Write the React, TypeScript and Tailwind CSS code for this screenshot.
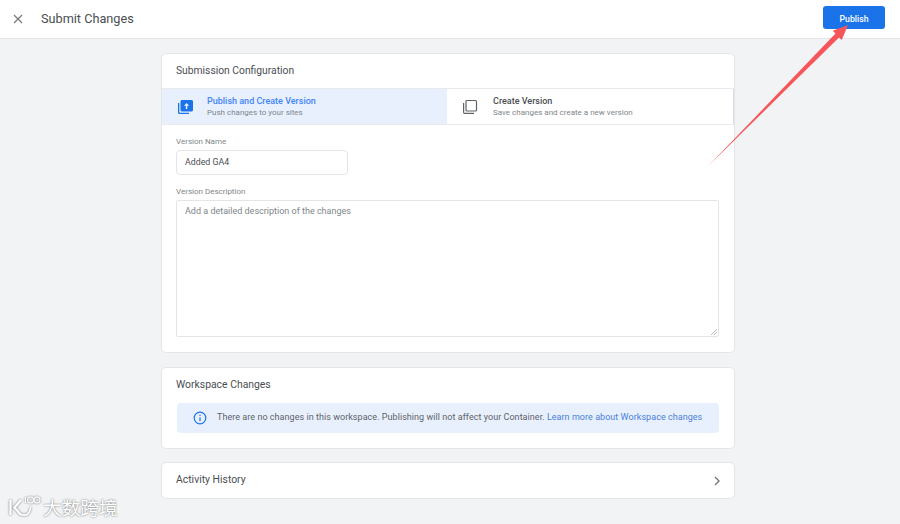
export default function App() {
  return (
    <div className="relative h-[524px] w-[900px] overflow-hidden bg-[#f1f3f4] font-['Roboto',sans-serif] text-[#3c4043]">
      <header className="flex h-[39px] items-center border-b border-[#e3e5e8] bg-white pl-[12px] pr-[15px]">
        <svg className="h-[12px] w-[12px] text-[#6f7478]" viewBox="0 0 12 12" fill="none" stroke="currentColor" strokeWidth="1.1"><path d="M2 2 10 10M10 2 2 10" /></svg>
        <h1 className="ml-[17px] text-[12.7px] text-[#4a4e52]">Submit Changes</h1>
        <button className="mt-[-3px] ml-auto h-[23px] w-[62px] rounded-[3px] bg-[#1a73e8] pt-[4px] text-[8.7px] font-medium text-white">Publish</button>
      </header>

      <main className="flex flex-col items-center pr-[4px] pt-[14px]">
        <section className="h-[300px] w-[574px] rounded-[5px] border border-[#e3e5e8] bg-white">
          <h2 className="flex h-[34px] items-center pl-[14px] text-[10.3px] text-[#4a4e52]">Submission Configuration</h2>
          <div className="flex h-[37px] border-y border-[#e8eaed]">
            <div className="flex w-[285px] items-center bg-[#e8f0fe] pl-[15px]">
              <svg className="h-[16px] w-[16px] text-[#1a73e8]" viewBox="0 0 16 16" fill="currentColor">
                <path d="M1 4h1.300v9.200c0 .3.2.5.5.5H12V15H2.500C1.700 15 1 14.300 1 13.500Z" />
                <path fillRule="evenodd" d="M5 1h9.500c.8 0 1.500.7 1.500 1.500v8.500c0 .8-.7 1.500-1.500 1.500H5c-.8 0-1.500-.7-1.500-1.500V2.500C3.500 1.700 4.200 1 5 1Zm4.600 3L7 6.800h1.800V10h1.500V6.800h1.800Z" />
              </svg>
              <div className="ml-[14px]">
                <div className="text-[9px] leading-[11px] font-medium text-[#4285f4]">Publish and Create Version</div>
                <div className="text-[8px] leading-[11px] text-[#80868b]">Push changes to your sites</div>
              </div>
            </div>
            <div className="flex flex-1 items-center border-r border-[#dadce0] pl-[15px]">
              <svg className="h-[16px] w-[16px] text-[#5f6368]" viewBox="0 0 16 16" fill="none" stroke="currentColor" strokeWidth="1.200">
                <rect x="4" y="1.500" width="10.500" height="10.500" rx="1" />
                <path d="M1.600 4v9.200c0 .7.500 1.200 1.200 1.200H12" />
              </svg>
              <div className="ml-[15px]">
                <div className="text-[9px] leading-[11px] font-medium text-[#4a4e52]">Create Version</div>
                <div className="text-[8px] leading-[11px] text-[#80868b]">Save changes and create a new version</div>
              </div>
            </div>
          </div>
          <div className="pr-[15px] pl-[14px] pt-[12px]">
            <div className="text-[8px] leading-[10px] text-[#80868b]">Version Name</div>
            <div className="mt-[3px] flex h-[25px] w-[172px] items-center rounded-[4px] border border-[#e3e5e8] pl-[8px] text-[8.8px] text-[#4a4e52]">Added GA4</div>
            <div className="mt-[12px] text-[8px] leading-[10px] text-[#80868b]">Version Description</div>
            <div className="relative mt-[3px] h-[137px] rounded-[2px] border border-[#e3e5e8] pl-[8px] pt-[5px] text-[9px] leading-[11px] text-[#80868b]">
              Add a detailed description of the changes
              <svg className="absolute right-[1px] bottom-[1px] h-[6px] w-[6px] text-[#9aa0a6]" viewBox="0 0 6 6" stroke="currentColor" strokeWidth="0.7"><path d="M0 6 6 0M3 6 6 3" /></svg>
            </div>
          </div>
        </section>

        <section className="mt-[14px] h-[82px] w-[574px] rounded-[5px] border border-[#e3e5e8] bg-white pr-[15px] pl-[15px]">
          <h2 className="-ml-px flex h-[33px] items-center text-[10.4px] text-[#4a4e52]">Workspace Changes</h2>
          <div className="mt-[2px] flex h-[30px] items-center rounded-[4px] bg-[#e8f0fe] pl-[16px] text-[9px] tracking-[0.045px] text-[#5f6368]">
            <svg className="h-[14px] w-[14px] text-[#1a73e8]" viewBox="0 0 14 14" fill="none" stroke="currentColor" strokeWidth="1.200">
              <circle cx="7" cy="7" r="5.800" />
              <path d="M7 6.200v4" />
              <path d="M7 3.800v1.300" />
            </svg>
            <span className="ml-[10px]">There are no changes in this workspace. Publishing will not affect your Container. <span className="text-[#4a7fd8]">Learn more about Workspace changes</span></span>
          </div>
        </section>

        <section className="mt-[13px] flex h-[37px] w-[574px] items-center justify-between rounded-[5px] border border-[#e3e5e8] bg-white pl-[14px] pr-[12px] text-[10.4px] text-[#4a4e52]">
          <span className="-mt-px">Activity History</span>
          <svg className="h-[10px] w-[10px] text-[#6f7478]" viewBox="0 0 10 10" fill="none" stroke="currentColor" strokeWidth="1.300"><path d="M3 1 7 5 3 9" /></svg>
        </section>
      </main>

      <svg className="absolute top-0 left-0 h-[524px] w-[900px]" viewBox="0 0 900 524" fill="#f6565a">
        <path d="M708 166.200 839 37.500 841.700 40 848 25 832.700 30.700 835.500 33.500 Z" />
      </svg>

      <div className="absolute bottom-[4px] left-[8px] flex items-center text-white [text-shadow:0_0_2px_rgba(0,0,0,0.6)]">
        <svg className="h-[26px] w-[34px]" viewBox="0 0 34 26" fill="none" stroke="#fff" strokeWidth="2.200" style={{ filter: "drop-shadow(0 0 1px rgba(0,0,0,.55))" }}>
          <path d="M2.500 6v15M13 6 6.500 13.500 13 21" />
          <path d="M12 20c6 3 10 0 10.500-7" strokeWidth="1.600" />
          <path d="M17.500 3v6" strokeWidth="1.100" />
          <circle cx="22.500" cy="6" r="3" strokeWidth="1.100" />
          <circle cx="29" cy="6" r="3" strokeWidth="1.100" />
        </svg>
        <span className="ml-[1px] font-['Noto_Sans_CJK_SC',sans-serif] text-[18.7px] leading-[24px] font-normal">大数跨境</span>
      </div>
    </div>
  );
}
